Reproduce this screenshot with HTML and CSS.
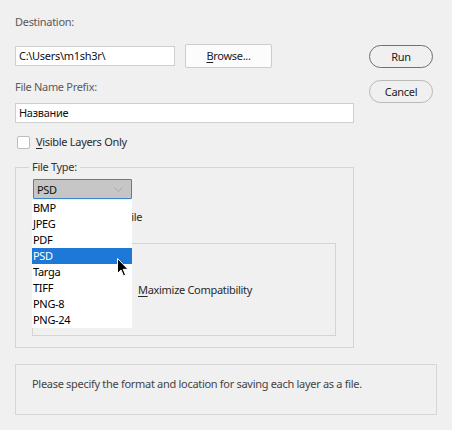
FILE: index.html
```html
<!DOCTYPE html>
<html>
<head>
<meta charset="utf-8">
<link rel="stylesheet" href="styles.css">
</head>
<body>
<div class="dialog">
  <div class="top">
    <div class="main">
      <div class="label">Destination:</div>
      <div class="dest-row">
        <div class="input dest">C:\Users\m1sh3r\</div>
        <div class="btn browse"><u>B</u>rowse...</div>
      </div>
      <div class="label prefix-label">File Name Prefix:</div>
      <div class="input prefix">Название</div>
      <div class="check-row">
        <span class="checkbox"></span>
        <span class="check-text"><u>V</u>isible Layers Only</span>
      </div>
    </div>
    <div class="side">
      <div class="pill default">Run</div>
      <div class="pill">Cancel</div>
    </div>
  </div>

  <fieldset class="group">
    <legend class="legend">File Type:</legend>
    <div class="select-wrap">
      <div class="select">
        <span>PSD</span>
        <svg class="chev" width="9" height="5" viewBox="0 0 9 5"><path d="M0.5 0.5 L4.5 4.5 L8.5 0.5" fill="none" stroke="#a8a8a8" stroke-width="1"/></svg>
      </div>
      <ul class="list">
        <li>BMP</li>
        <li>JPEG</li>
        <li>PDF</li>
        <li class="sel">PSD</li>
        <li>Targa</li>
        <li>TIFF</li>
        <li>PNG-8</li>
        <li>PNG-24</li>
      </ul>
      <svg class="cursor" width="12" height="19" viewBox="0 0 12 19"><path d="M0.5 0.5 L0.5 15.5 L4 12 L6.5 17.8 L8.6 16.9 L6.2 11.3 L11 11.3 Z" fill="#000" stroke="#fff" stroke-width="1" stroke-linejoin="miter"/></svg>
    </div>
    <div class="icc-row">
      <span class="checkbox"></span>
      <span class="check-text">Include ICC Profile</span>
    </div>
    <fieldset class="inner">
      <legend class="legend">PSD Options:</legend>
      <div class="max-row">
        <span class="checkbox"></span>
        <span class="check-text"><u>M</u>aximize Compatibility</span>
      </div>
    </fieldset>
  </fieldset>

  <div class="info">Please specify the format and location for saving each layer as a file.</div>
</div>
</body>
</html>
```
FILE: styles.css
```css
* { box-sizing: border-box; }
html, body {
  margin: 0;
  padding: 0;
  background: #f0f0f0;
}
body {
  width: 452px;
  height: 430px;
  overflow: hidden;
  font-family: "Noto Sans", "Open Sans", sans-serif;
  font-size: 11px;
  letter-spacing: -0.3px;
  color: #333;
}
u { text-decoration: underline; text-underline-offset: 2px; }
.dialog {
  padding: 14px 0 0 15px;
}
.top {
  display: flex;
}
.main {
  width: 339px;
  display: flex;
  flex-direction: column;
  align-items: flex-start;
}
.label {
  line-height: 16px;
  height: 16px;
  color: #5a5a5a;
}
.dest-row {
  margin-top: 14px;
  display: flex;
  align-items: center;
  gap: 10px;
  height: 24px;
}
.input {
  height: 20px;
  line-height: 18px;
  border: 1px solid #cfcfcf;
  background: #fff;
  padding: 0 3px;
  color: #111;
}
.dest { width: 160px; }
.btn {
  width: 87px;
  height: 24px;
  border: 1px solid #cccccc;
  background: #fcfcfc;
  border-radius: 2px;
  text-align: center;
  line-height: 22px;
  color: #222;
}
.prefix-label { margin-top: 11px; }
.prefix {
  margin-top: 8px;
  width: 339px;
}
.check-row {
  margin-top: 11px;
  height: 16px;
  display: flex;
  align-items: center;
  padding-left: 2px;
}
.checkbox {
  display: inline-block;
  width: 13px;
  height: 13px;
  border: 1px solid #bdbdbd;
  border-radius: 2px;
  background: #fff;
  flex: none;
}
.check-text {
  margin-left: 6px;
  line-height: 16px;
  color: #2a2a2a;
}
.side {
  margin-left: 15px;
  padding-top: 31px;
  display: flex;
  flex-direction: column;
  gap: 12px;
}
.pill {
  width: 64px;
  height: 23px;
  border: 1px solid #b9b9b9;
  border-radius: 12px;
  background: #f0f0f0;
  text-align: center;
  line-height: 21px;
  color: #222;
}
.pill.default { border-color: #707070; }

.group {
  margin: 9px 0 0 0;
  width: 339px;
  height: 189px;
  border: 1px solid #d4d4d4;
  padding: 0 0 0 17px;
  position: relative;
}
.legend {
  margin-left: -4px;
  padding: 0 3px;
  line-height: 16px;
  color: #333;
}
.select-wrap {
  position: relative;
  margin-top: 4px;
  width: 99px;
  height: 20px;
}
.select {
  width: 99px;
  height: 20px;
  background: #c6c6c6;
  border: 1px solid #3c83d0;
  border-radius: 1px;
  display: flex;
  align-items: center;
  justify-content: space-between;
  padding: 0 8px 0 3px;
  color: #111;
}
.list {
  position: absolute;
  left: -1px;
  top: 21px;
  z-index: 5;
  margin: 0;
  padding: 0;
  list-style: none;
  width: 100px;
  background: #fff;
}
.list li {
  height: 16px;
  line-height: 16px;
  padding-left: 1px;
  color: #000;
}
.list li.sel {
  background: #1e78d8;
  color: #fff;
}
.cursor {
  position: absolute;
  left: 84px;
  top: 79px;
  z-index: 6;
}
.icc-row {
  margin-top: 10px;
  height: 16px;
  display: flex;
  align-items: center;
  padding-left: 1px;
}
.inner {
  margin: 10px 0 0 -1px;
  width: 304px;
  height: 101px;
  border: 1px solid #d4d4d4;
  padding: 0 0 0 86px;
}
.inner .legend { margin-left: -70px; }
.max-row {
  margin-top: 31px;
  height: 16px;
  display: flex;
  align-items: center;
}
.info {
  margin-top: 16px;
  width: 422px;
  height: 51px;
  border: 1px solid #d6d6d6;
  padding: 11px 0 0 16px;
  line-height: 16px;
  color: #444;
}
```
